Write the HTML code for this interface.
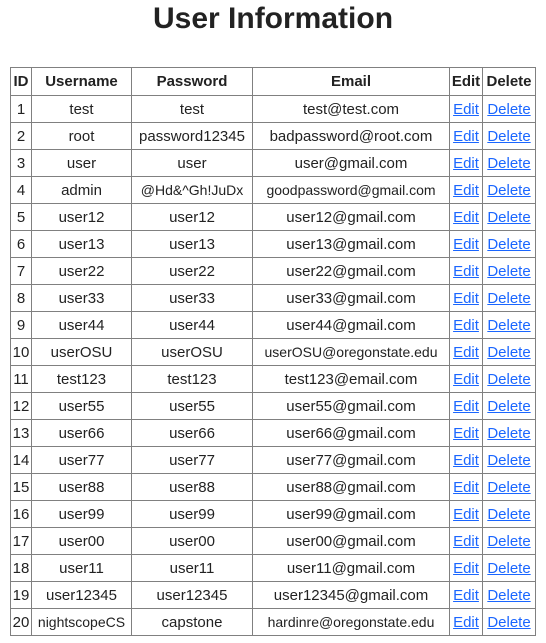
<!DOCTYPE html>
<html><head><style>
body{margin:0;background:#fff;font-family:"Liberation Sans",sans-serif;color:#222;}
h1{margin:0;position:absolute;top:0;left:0;width:546px;text-align:center;font-size:30px;line-height:38px;font-weight:bold;color:#222;}
table{position:absolute;left:10px;top:67px;border-collapse:collapse;table-layout:fixed;width:525px;font-size:15px;}
td,th{border:1px solid #808080;height:26px;padding:0;text-align:center;white-space:nowrap;overflow:hidden;}
th{height:27px;font-weight:bold;}
a{color:#1a66ff;text-decoration:underline;}
</style></head><body>
<h1>User Information</h1>
<table>
<colgroup><col style="width:21px"><col style="width:100px"><col style="width:121px"><col style="width:197px"><col style="width:33px"><col style="width:53px"></colgroup>
<tr><th>ID</th><th>Username</th><th>Password</th><th>Email</th><th>Edit</th><th>Delete</th></tr>
<tr><td>1</td><td>test</td><td>test</td><td>test@test.com</td><td><a>Edit</a></td><td><a>Delete</a></td></tr>
<tr><td>2</td><td>root</td><td>password12345</td><td>badpassword@root.com</td><td><a>Edit</a></td><td><a>Delete</a></td></tr>
<tr><td>3</td><td>user</td><td>user</td><td>user@gmail.com</td><td><a>Edit</a></td><td><a>Delete</a></td></tr>
<tr><td>4</td><td>admin</td><td style="font-size:14px">@Hd&amp;^Gh!JuDx</td><td style="font-size:14px">goodpassword@gmail.com</td><td><a>Edit</a></td><td><a>Delete</a></td></tr>
<tr><td>5</td><td>user12</td><td>user12</td><td>user12@gmail.com</td><td><a>Edit</a></td><td><a>Delete</a></td></tr>
<tr><td>6</td><td>user13</td><td>user13</td><td>user13@gmail.com</td><td><a>Edit</a></td><td><a>Delete</a></td></tr>
<tr><td>7</td><td>user22</td><td>user22</td><td>user22@gmail.com</td><td><a>Edit</a></td><td><a>Delete</a></td></tr>
<tr><td>8</td><td>user33</td><td>user33</td><td>user33@gmail.com</td><td><a>Edit</a></td><td><a>Delete</a></td></tr>
<tr><td>9</td><td>user44</td><td>user44</td><td>user44@gmail.com</td><td><a>Edit</a></td><td><a>Delete</a></td></tr>
<tr><td>10</td><td>userOSU</td><td>userOSU</td><td style="font-size:14px">userOSU@oregonstate.edu</td><td><a>Edit</a></td><td><a>Delete</a></td></tr>
<tr><td>11</td><td>test123</td><td>test123</td><td>test123@email.com</td><td><a>Edit</a></td><td><a>Delete</a></td></tr>
<tr><td>12</td><td>user55</td><td>user55</td><td>user55@gmail.com</td><td><a>Edit</a></td><td><a>Delete</a></td></tr>
<tr><td>13</td><td>user66</td><td>user66</td><td>user66@gmail.com</td><td><a>Edit</a></td><td><a>Delete</a></td></tr>
<tr><td>14</td><td>user77</td><td>user77</td><td>user77@gmail.com</td><td><a>Edit</a></td><td><a>Delete</a></td></tr>
<tr><td>15</td><td>user88</td><td>user88</td><td>user88@gmail.com</td><td><a>Edit</a></td><td><a>Delete</a></td></tr>
<tr><td>16</td><td>user99</td><td>user99</td><td>user99@gmail.com</td><td><a>Edit</a></td><td><a>Delete</a></td></tr>
<tr><td>17</td><td>user00</td><td>user00</td><td>user00@gmail.com</td><td><a>Edit</a></td><td><a>Delete</a></td></tr>
<tr><td>18</td><td>user11</td><td>user11</td><td>user11@gmail.com</td><td><a>Edit</a></td><td><a>Delete</a></td></tr>
<tr><td>19</td><td>user12345</td><td>user12345</td><td>user12345@gmail.com</td><td><a>Edit</a></td><td><a>Delete</a></td></tr>
<tr><td>20</td><td style="font-size:14px">nightscopeCS</td><td>capstone</td><td style="font-size:14px">hardinre@oregonstate.edu</td><td><a>Edit</a></td><td><a>Delete</a></td></tr>
</table>
</body></html>
